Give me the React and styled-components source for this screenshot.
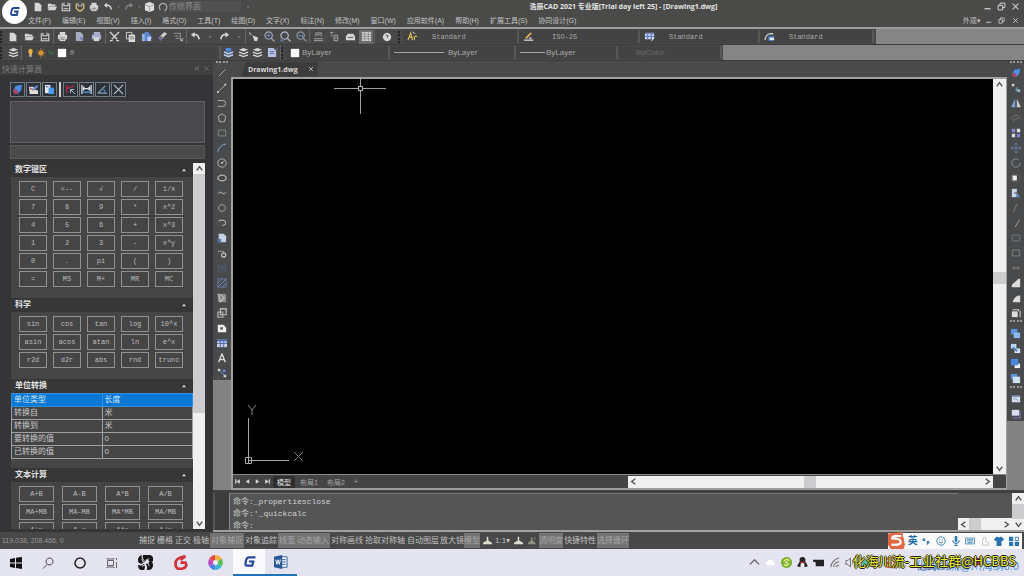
import React from 'react';
import styled, { createGlobalStyle, css } from 'styled-components';

const sans = '"Liberation Sans", "Noto Sans CJK SC", sans-serif';
const mono = '"Liberation Mono", "Noto Sans CJK SC", monospace';

const GlobalStyle = createGlobalStyle`
  *, *::before, *::after { box-sizing: border-box; }
  body { margin: 0; background: #484848; font-family: ${sans}; color: #b4b4b4; }
  button, input, select { font: inherit; color: inherit; margin: 0; padding: 0; border: 0; background: none; border-radius: 0; }
  svg { display: block; }
`;

/* ---------- icon drawings, all on a 12 x 12 grid ---------- */
const W = '#d6d6d6';
const B = '#7f9fd8';
const s = (d, c = W, w = 1) => <path d={d} fill="none" stroke={c} strokeWidth={w} />;
const f = (d, c = W) => <path d={d} fill={c} />;

const drawings = {
  file: f('M2 1h5l3 3v7H2z'),
  open: <>{f('M1 2h4l1 1h4v2H3L1 9z')}{f('M3 5.5h9L10 10H1z')}</>,
  save: <>{s('M1.5 1.5v9h9v-9', W, 1.3)}{s('M3.5 1v3.5h5V1M3 8h6', W, 1.3)}</>,
  saveAs: <>{s('M1.5 1.5v6l3 3h3l3-3v-6', '#d9b76a', 1.6)}{s('M3.5 1v3.5h5V1')}</>,
  print: <>{f('M3 1h6v3H3zM1 4h10v5H1z')}{f('M3 7h6v4H3z', '#eeeeee')}{s('M3 7.5h6M4 9.5h4', '#666')}</>,
  preview: <>{f('M2 1h5l3 3v7H2z', '#a8abc2')}{s('M7 7l3 3', '#6472b5', 1.6)}</>,
  plot: <>{f('M3 1h7v3H3zM1 4h10v5H1z', '#a8aed0')}{f('M3 7h6v4H3z', W)}</>,
  undo: <>{f('M1 4l4-3v6z')}{s('M4 4q5-1 6 5', W, 1.8)}</>,
  redo: <>{f('M11 4L7 1v6z')}{s('M8 4Q3 3 2 9', W, 1.8)}</>,
  redoDim: <>{f('M11 4L7 1v6z', '#858585')}{s('M8 4Q3 3 2 9', '#858585', 1.8)}</>,
  caret: f('M4 5h4l-2 2.5z', '#8a8a8a'),
  db: <>{f('M1 3l5-2 5 2v7l-5 2-5-2z', '#e0e0e0')}{s('M1 4l5 2 5-2M6 6v5', '#999')}</>,
  ring: s('M3 9.5A4.5 4.5 0 1 1 9 9.5l-1 1.5', '#aaa', 1.5),
  cut: s('M1 1l8 8M11 1L3 9M1 10.5h3M8 10.5h3', W, 1.5),
  copy: <>{s('M1.5 1.5h6v7h-6z')}{f('M4 4h7v8H4z', '#dcdcdc')}{s('M5 6.5h5M5 8.5h5', '#777')}</>,
  paste: <>{f('M1 3h6v8H1z', '#98b0dc')}{f('M4 1h4l4 6-2 4H4z', '#5a86cf')}{f('M7 6h4v5H7z', '#b9cdf0')}</>,
  brush: <>{f('M4 5l4-4 3 2-4 4z', '#d0d0d0')}{f('M1 7l3-2 3 2-3 4z', '#70749c')}{s('M4 5l3 3', '#c69c52')}</>,
  block: <>{s('M1 2.5h7M2 5.5h4M8 2v6H3', '#999')}{s('M8 9l3 2M8 11l3-3', W)}</>,
  pan: <>{f('M5 5l6 2-1 4H7z')}{s('M1 2l4 3M2 1v3', '#aaa')}</>,
  zoomIn: <>{s('M5 1a4 4 0 1 0 .1 0M8 8l3.5 3.5', '#9aa5bb', 1.3)}{s('M3 5h4M5 3v4', '#6d91d0')}</>,
  zoom: <>{s('M5 1a4 4 0 1 0 .1 0M8 8l3.5 3.5', '#b5bccb', 1.3)}{s('M1 9v2h3', '#6d91d0')}</>,
  zoomPrev: <>{s('M5 1a4 4 0 1 0 .1 0M8 8l3.5 3.5', '#8f96a5', 1.3)}{s('M3 5h3M7 4v3', '#6d91d0')}</>,
  props: <>{s('M3 6V2h6v4M1 8.5h10M1 10.5h10', '#a6a6a6')}{s('M4 4h4', '#a6a6a6')}</>,
  design: <>{s('M1 1.5h4M3 3v3', '#aaa')}{s('M5.5 4.5h4v6h-4zM7.5 6v3', '#aaa')}</>,
  palette: <>{f('M1 6l2-3h6l2 3v4H1z')}{s('M3 7h6', '#555')}</>,
  calc: <>{f('M1 1h10v10H1z', '#d0d0d0')}{s('M1 3.5h10M1 6h10M1 8.5h10M4 1v10M8 1v10', '#777', .7)}</>,
  help: <>{f('M6 1a5 5 0 1 0 .1 0')}{s('M4.5 4.5q1.5-2 3 0L6 7', '#555', 1.2)}</>,
  textStyle: <>{s('M1 10l3-8 2 8M2 7h4M8 10V6M8 7q1-2 3-1', '#e0c060', 1.2)}{s('M6 1l3 2', '#ddd')}</>,
  dim: <>{s('M1 10h10', W, 1.4)}{s('M3 8l6-6', '#d8b45c', 2)}{f('M7 7h2v2H7z')}</>,
  tableStyle: <>{f('M1 2h10v7H1z', '#c8d2ee')}{s('M1 3h10M1 6h10M4 3v6M8 3v6', '#5570bd')}{s('M8 11l3-4', '#ddd')}</>,
  leader: <>{s('M1 10q1-6 5-7h4', '#ccc', 1.4)}{f('M4 5h7v6H4z', '#3f68a8')}{f('M6 7h5v3H6z', '#dbe6f5')}</>,
  layers: <>{f('M1 3l5-2 5 2-5 2z')}{s('M1 5.5l5 2 5-2M1 8.5l5 2 5-2', W, 1.5)}</>,
  layersBlue: <>{f('M3 1h6v4H3z', '#4f86d8')}{s('M1 5.5l5 2 5-2M1 8.5l5 2 5-2', '#b4c7ee', 1.8)}</>,
  layerFile: <>{f('M1 1h6l3 3v7H1z', '#b9c0e0')}{s('M3 5h5M3 7h5M11 1v3', '#5d6ba6')}</>,
  bulb: <>{f('M6 1a3.5 3.5 0 0 1 2 6v2H4V7a3.5 3.5 0 0 1 2-6z', '#e8b048')}{f('M4.500 9.500h3v2h-3z', '#ddd')}</>,
  sun: <>{f('M6 3a3 3 0 1 0 .1 0', '#eea63a')}{s('M6 0v12M0 6h12M2 2l8 8M10 2l-8 8', '#c88a34', .8)}</>,
  lock: s('M2 6h8M3 6V3M3 8h6', '#3a6b46', 1.6),
  white: f('M1 1h10v10H1z', '#ffffff'),
  min: s('M2 9h8', W, 1.6),
  restore: s('M1.500 4.500h6v6h-6zM4 4V1.500h6.500v6H8', W, 1.3),
  close: s('M2 2l8 8M10 2l-8 8', W, 1.4),
  pin: s('M9 2v8M9 6H5M5 3v6z', '#777'),
  closeDim: s('M2 2l8 8M10 2l-8 8', '#777', 1.3),
  eraser: <>{f('M1 8l3-6 7-1-1 6-4 4z', '#4c8ee6')}{f('M1 8l2-3 4 3-1 3H3z', '#a04863')}</>,
  eraserPen: <>{f('M1 3h5l1 3 4 1v4H2z', '#e5dede')}{f('M5 5l5-4 1 2-4 4z', '#6593d8')}{s('M2 4l4 3', '#b5625d', 1.4)}</>,
  pasteVal: <>{f('M1 1h6v9H1z', '#dce7f2')}{f('M5 4h6v7H5z', '#499bea')}{s('M2 3h3', '#3a5d87')}</>,
  getPoint: <>{s('M2 1v9M2 5l8-3', '#a52e47', 1.8)}{s('M6 6l5 5M6 6v4M6 6h4', '#b7c6de')}</>,
  dist: <>{s('M1 1v10M11 1v10M2 5h8', '#d5e2f0', 1.4)}{s('M1 9h10', '#5593d8', 1.5)}{f('M5 5L2 2v6zM7 5l3-3v6z')}</>,
  angle: <>{s('M1 10L9 2M1 10h10', '#88a5b5', 1.3)}{s('M6 5q3 2 3 5', '#4288cf', 1.3)}</>,
  cross: s('M1 1l10 10M11 1L1 11', '#c0ccd4', 1.1),
  line: s('M2 10l8-8', '#b5b5b5'),
  xline: <>{s('M1 11L11 1', '#b5b5b5')}{f('M0 10h2v2H0zM9 1h2v2H9z')}</>,
  pline: s('M1 3h6a3 3 0 0 1 0 7H1', '#b5b5b5', 1.1),
  polygon: s('M6 1l4.500 3-1.500 6.500H3L1.500 4z', '#b5b5b5', 1.1),
  rect: s('M1.500 2.500h9v7h-9z', '#87918f'),
  rectBlue: s('M1.500 2.500h9v7h-9z', '#76797e'),
  arc: s('M1 11Q2 3 11 1', '#88a5d8', 1.2),
  circle: <>{s('M6 1a5 5 0 1 0 .1 0M6 6l3-3', '#b5b5b5', 1.1)}{f('M5 5h2v2H5z')}</>,
  ellipse: s('M6 2.500a5 3.500 0 1 0 .1 0', '#b5b5b5', 1.4),
  spline: s('M1 7q2-4 5-1t5-1', '#b5b5b5', 1.2),
  cloud: s('M3 3q3-2 6 0 3 3 0 6-3 2-6 0-3-3 0-6z', '#aaa'),
  earc: s('M2 4q4-3 8 0 2 4-4 5', '#aaa', 1.3),
  insert: <>{f('M2 1h6l3 3v7H2z', '#c8d1e8')}{f('M1 7h4v4H1z', '#5578b8')}</>,
  makeBlock: <>{s('M1 4h7v3', '#aaa')}{s('M8 6a2.500 2.500 0 1 0 .1 0', '#ccc', 1.3)}</>,
  points: s('M2 2v3M6 2v3M10 2v3M2 8v3M6 8v3M10 8v3M1 6h10', '#586a96', 1),
  hatch: <>{s('M1 1h10v10H1z', '#697da5')}{s('M1 6l5-5M1 11L11 1M6 11l5-5', '#7396cf')}</>,
  gradient: <>{f('M1 1h10v10H1z', '#8b8b8b')}{s('M3 1l6 5-6 5M1 1l4 10', '#d5d5d5')}</>,
  region: <>{s('M4 1h7v7H4z', '#ccc', 1.3)}{s('M1 5h6v6H1z', '#aaa', 1.5)}</>,
  wipe: <>{f('M1 2h7l3 4v5H1z', '#f0f0f0')}{f('M4 5h3v3H4z', '#555')}</>,
  table: <>{f('M0 2h12v9H0z', '#c6cfe8')}{f('M0 2h12v2H0z', '#4568ba')}{s('M0 6.500h12M4 4v7M8 4v7', '#3f5994')}</>,
  text: s('M2 11L6 1l4 10M3.500 8h5', '#dedede', 1.6),
  nodes: <>{f('M1 1h3v3H1zM8 8h3v3H8z')}{f('M7 2h3v3H7z', '#6391dc')}{s('M3 3l6 6', '#7f9fd8')}</>,
  copyObj: <>{f('M1 1h3v3H1z')}{s('M7 5v6M5 8h6', '#7eb4d8')}{f('M8 8h3v3H8z', '#9bb')}</>,
  mirror: <>{f('M5 1v10H0z', B)}{f('M7 1v10h5z', '#ccc')}</>,
  offset: s('M1 8q1-6 7-5l3 4M3 10q0-4 6-3', '#777', 1.1),
  array: <>{f('M1 1h4v4H1zM7 7h4v4H7z', '#8580d0')}{f('M7 1h4v4H7zM1 7h4v4H1z', '#ddd')}</>,
  move: s('M6 0v12M0 6h12M4 2l2-2 2 2M4 10l2 2 2-2M2 4L0 6l2 2M10 4l2 2-2 2', '#6c84ba', 1),
  rotate: s('M9 2A5 5 0 1 0 11 6', '#8c9295', 1.1),
  scale: <>{f('M1 3h6v6H1z', '#eee')}{s('M1.500 1.500h9v9h-9z', '#5c5c5c')}</>,
  stretch: <>{f('M1 1h6v10H1z', '#c9d4e2')}{f('M7 5l4 6H6z', '#578fc5')}{s('M4 6h4', '#333')}</>,
  trim: s('M3 11L7 1', '#858585', 1),
  extend: s('M5 11l5-9', '#a0a0a0', 1.2),
  join: s('M1 6h10M4 4v4M8 4v4', '#858585'),
  chamfer: f('M1 11h10V1H9L1 8z', '#dcdcdc'),
  fillet: f('M2 11h9V3q-7 0-9 8z', '#dcdcdc'),
  explode: <>{f('M1 4h7v7H1z', '#ddd')}{s('M2 2h7v2M11 3v8', '#ccc', 1.3)}</>,
  order1: <>{f('M1 1h7v6H1z', '#5b93e0')}{f('M4 5h7v6H4z', '#8db9ee')}</>,
  order2: <>{f('M1 1h6v5H1z', '#bed5f1')}{f('M5 6h6v5H5z', '#dce8f6')}{s('M3 5l5 4', '#4c82cd', 2)}</>,
  order3: <>{f('M5 6h6v5H5z', '#eee')}{f('M1 1h8v7H1z', '#4d88dc')}</>,
  order4: <>{f('M1 1h7v6H1z', '#5b93e0')}{f('M3 4h8v7H3z', '#cde2f4')}</>,
  order5: <>{f('M1 2h10v8H1z', '#d6dcea')}{s('M1 3h10M3 7l2-2 3 3', '#6885bd')}</>,
  order6: <>{f('M1 1h9v7H1z', '#dcdcf0')}{s('M2 10.500h9V3', '#7569b5', 1.5)}</>,
  up: s('M3 8l3-4 3 4', '#555', 1.6),
  down: s('M3 4l3 4 3-4', '#555', 1.6),
  left: s('M8 3L4 6l4 3', '#555', 1.6),
  right: s('M4 3l4 3-4 3', '#555', 1.6),
  triUp: f('M3 8h6L6 4z', '#d8d8d8'),
  first: f('M2 2h2v8H2zM10 2v8L4 6z'),
  prev: f('M9 2v8L3 6z'),
  next: f('M3 2v8l6-4z'),
  last: f('M2 2v8l6-4zM8 2h2v8H8z'),
  person: f('M5 1h2v5l5 3v2H0V9l5-3z', '#dcdccc'),
  personDim: <>{f('M4 2h2v4l4 3v2H0V9l4-3z', '#909080')}{s('M9 1v4', '#909080')}</>,
  windows: f('M0 2l5-1v4.500H0zM6 .8L12 0v5.500H6zM0 6.500h5V11l-5-1zM6 6.500h6V12l-6-1z', '#111'),
  search: s('M7.500 1a3.500 3.500 0 1 0 .1 0M5 7.500L1 11.500', '#444', 1),
  cortana: s('M6 1a5 5 0 1 0 .1 0', '#222', 1.5),
  taskView: s('M1.500 3.500h6v5h-6zM1 1v1h7V1M1 11v-1h7v1M10.500 1v2M10.500 5v6', '#555', .9),
  shutter: <>
    {f('M4 0h5q3 0 3 3v2q-2 1-4-1-1-1-2 1-3-2-2-5zM0 4q0-3 3-4-1 4 3 5-2 1-3 2-3 0-3-3zM12 8q0 4-4 4H7q1-3-1-5 3 0 3-2 3 0 3 3zM0 8q3 1 5-1 1 2 0 5H3q-3 0-3-4z', '#161616')}
    {s('M3 3q0 3 3 3M9 3q-3 0-3 3M9 9q0-3-3-3M3 9q3 0 3-3', '#e4e4f0', .7)}
  </>,
  redG: s('M10 1Q2 2 2 7t5 4 3-5H6M10 1L6 4', '#cf343b', 2.2),
  fan: <>
    {f('M6 6L6 0A6 6 0 0 0 1 3z', '#e54c48')}{f('M6 6L1 3a6 6 0 0 0 0 6z', '#c34bbd')}
    {f('M6 6L1 9a6 6 0 0 0 5 3z', '#4d80e4')}{f('M6 6v6a6 6 0 0 0 5-3z', '#36b9d5')}
    {f('M6 6l5 3a6 6 0 0 0 0-6z', '#58bf53')}{f('M6 6l5-3a6 6 0 0 0-5-3z', '#f0b33d')}
    <circle cx="6" cy="6" r="2" fill="#f4f0f6" />
  </>,
  gLogo: s('M11.500 2.200H5.500Q3.500 2.200 2.800 5L2.200 8Q2 9.800 4 9.800H8.500L9.500 6H5.500', '#23479b', 2),
  word: <>
    {f('M6 1h5.500v10H6z', '#f5f8ff')}{s('M6 1.500h5.200v9H6M7 4h3M7 6h3M7 8h3', '#285796', .8)}
    {f('M0 1.500L7 0v12L0 10.500z', '#285796')}{s('M1.500 4l1 4 1-4 1 4 1-4', '#fff', .8)}
  </>,
  caretUp: s('M1 8l5-5 5 5', '#555', 1.2),
  weather: f('M2 9q-2-3 1-4 2-4 5-1 4 1 2 5z', '#ffffff'),
  green: <>{f('M6 0a6 6 0 1 0 .1 0', '#79ae32')}{s('M3 5q3-4 6-1M9 7q-3 4-6 1', '#e9f07a', 1.5)}{f('M5 5h2v2H5z', '#fff')}</>,
  teal: f('M1 3h10v7H1z', '#5cc4b4'),
  badge: <>{f('M1 1h10v8H8l-2 3-2-3H1z', '#a8283a')}</>,
  penguin: <>{f('M6 0q4 0 3 5l3 5-3 1H3L0 10l3-5Q2 0 6 0z', '#272224')}{f('M6 6q3 1 2 5H4q-1-4 2-5z', '#eee')}{s('M3 5.500q3 1 6 0', '#c1313b', 1.3)}</>,
  battery: f('M2 3h10v7H3V6L0 5V3z', '#222'),
  wifi: s('M2 11Q3 3 11 1M5 11q0-4 6-6M8 11q0-2 3-2', '#777', 1.2),
  speaker: <>{s('M1 4h2l3-3v10L3 8H1z', '#666')}{s('M8 4q1.500 2 0 4M10 2q3 4 0 8', '#777')}</>,
  smile: <>{s('M6 1a5 5 0 1 0 .1 0M3.500 7q2.500 3 5 0', '#3179ae', 1.1)}{f('M4 4h1v1H4zM7 4h1v1H7z', '#3179ae')}</>,
  mic: <>{f('M4.500 0h3v7h-3z', '#2a73ac')}{s('M2 5q0 4 4 4t4-4M6 9v3M4 11.500h4', '#2a73ac', 1.2)}</>,
  keyboard: s('M.5 2.500h11v7H.5zM2 4.500h8M2 6h8M3 8h6', '#3b82b5', 1),
  hand: s('M3 11V6L5 1l2 1v5l3 1v3z', '#c3c3c3', 1.1),
  shirt: f('M3 1h1.500q1.500 1.500 3 0H9l3 2.500L10.500 6H9v6H3V6H1.500L0 3.500z', '#2a73ac'),
  grid: <>{f('M0 1h5v5H0zM7 7h5v5H7zM0 7h5v5H0z', '#2a73ac')}{s('M7.500 1.500h4v4h-4z', '#2a73ac')}</>,
  dots: f('M2 3h3v3H2zM7 6h3v2L7 11z', '#3179ae'),
  sogou: <>{f('M0 1l10-1 2 9-1 3-9 0-2-3z', '#e26745')}{s('M9.500 3Q3 2 3 4.500q6 0 6 2.500T2.500 9', '#fff', 1.6)}</>,
};

const Icon = ({ name, size = 11 }) => (
  <svg width={size} height={size} viewBox="0 0 12 12" aria-hidden="true">{drawings[name]}</svg>
);

/* ---------- frame ---------- */
const App = styled.div`
  position: relative;
  display: flex;
  flex-direction: column;
  height: 100vh;
  overflow: hidden;
  background: #454545;
`;
const IconButton = styled.button`
  display: flex;
  align-items: center;
  justify-content: center;
  width: ${(p) => p.$w || 14}px;
  height: ${(p) => p.$h || 14}px;
  flex: none;
  background: ${(p) => (p.$active ? '#6c6c6c' : 'transparent')};
`;
const Tool = ({ name, size, ...rest }) => (
  <IconButton type="button" aria-label={name} {...rest}><Icon name={name} size={size} /></IconButton>
);
const Spacer = styled.div`flex: 1;`;

const Logo = styled.button`
  && { position: absolute; left: 2px; top: -1px; width: 25px; height: 25px; border-radius: 50%; background: #fff; }
  display: flex;
  align-items: center;
  justify-content: center;
  z-index: 2;
`;
const TitleBar = styled.header`
  display: flex;
  align-items: center;
  flex: none;
  height: 13px;
  padding: 0 2px 0 31px;
  background: #4a4b49;
  font-size: 8px;
`;
const Workspace = styled.select`
  && { width: 72px; height: 11px; appearance: none; background: #505150; color: #8c8c8c; }
`;
const Title = styled.h1`
  flex: 1;
  margin: 0;
  padding-left: 12px;
  text-align: center;
  font: bold 7px/12px "Open Sans", "Noto Sans CJK SC", sans-serif;
  color: #e4e4e4;
`;
const MenuBar = styled.nav`
  display: flex;
  align-items: center;
  flex: none;
  height: 16px;
  gap: 11px;
  padding: 0 2px 0 28px;
  background: #4a4b49;
  border-bottom: 2px solid #9c9c9c;
  font-size: 7px;
  color: #c2c2c2;
  white-space: nowrap;
`;
const MenuButton = styled.button`height: 14px; flex: none;`;
const Strip = styled.div`
  display: flex;
  flex: none;
  height: 16px;
  background: #858585;
  border-bottom: 1px solid #3c3c3c;
`;
const StripTools = styled.div`
  display: flex;
  align-items: center;
  width: ${(p) => p.$w}px;
  background: #484848;
`;
const Group = styled.div`
  display: flex;
  align-items: center;
  justify-content: space-around;
  width: ${(p) => p.$w}px;
  height: ${(p) => p.$h || 15}px;
  flex: none;
  border-right: ${(p) => (p.$plain ? 0 : 1)}px solid #636363;
`;
const Grip = styled.div`
  width: 5px;
  height: 12px;
  flex: none;
  border-left: 2px dotted #222;
`;
const StyleSelect = styled.select`
  && {
    appearance: none;
    flex: 1;
    min-width: 0;
    height: 13px;
    padding-left: ${(p) => p.$pad || 0}px;
    background: #434343;
    color: ${(p) => (p.$dim ? '#686868' : '#a8a8a8')};
    font: ${(p) => (p.$sans ? `8px ${sans}` : `7px ${mono}`)};
  }
`;
const Field = styled.label`
  display: flex;
  align-items: center;
  gap: ${(p) => p.$gap || 2}px;
  width: ${(p) => p.$w}px;
  height: 13px;
  flex: none;
  padding: 0 4px;
  background: #434343;
  border-right: 2px solid #585858;
`;
const Rule = styled.span`
  width: ${(p) => p.$w}px;
  height: 1px;
  background: #a5a5a5;
`;

/* ---------- calculator ---------- */
const Body = styled.div`
  display: flex;
  flex: 1;
  min-height: 0;
`;
const Calc = styled.aside`
  display: flex;
  flex-direction: column;
  width: 213px;
  flex: none;
  background: #353537;
  padding-bottom: 3px;
`;
const CalcTitle = styled.div`
  display: flex;
  align-items: center;
  flex: none;
  height: 14px;
  padding: 0 2px;
  background: #404040;
  color: #7c7c7c;
  font-size: 8px;
`;
const CalcTools = styled.div`
  display: flex;
  gap: 1px;
  flex: none;
  margin: 7px 0 4px 10px;
`;
const CalcTool = styled.button`
  && { width: 15px; height: 15px; border: 1px solid #707c84; background: #2d3238; }
  display: flex;
  align-items: center;
  justify-content: center;
`;
const Divider = styled.span`width: 2px; margin: 0 1px; background: #d0d0d0;`;
const Display = styled.output`
  height: 42px;
  flex: none;
  margin: 0 8px 2px 10px;
  background: #4a4a4c;
  border: 1px solid #606062;
`;
const CalcInput = styled.input`
  && { height: 14px; flex: none; margin: 0 8px 4px 10px; background: #4a4a4c; border: 1px solid #585858; }
`;
const ScrollArea = styled.div`
  display: flex;
  flex: 1;
  min-height: 0;
  margin: 0 8px 0 11px;
`;
const Sections = styled.div`
  flex: 1;
  min-height: 0;
  overflow: hidden;
  background: #454546;
`;
const SectionHead = styled.button`
  && { width: 100%; height: 14px; padding: 0 5px 0 4px; background: #363636; }
  display: flex;
  align-items: center;
  justify-content: space-between;
  color: #e2e2e2;
  font: bold 8px/14px ${sans};
`;
const Keys = styled.div`
  display: grid;
  grid-template-columns: repeat(${(p) => p.$cols}, 1fr);
  gap: 2px ${(p) => (p.$cols === 5 ? 6 : 8)}px;
  padding: 4px 10px 11px 8px;
`;
const Key = styled.button`
  && { height: 16px; border: 1px solid #909090; color: #bcbcbc; font: 7px/14px ${mono}; }
`;
const Units = styled.table`
  width: 100%;
  border-collapse: collapse;
  table-layout: fixed;
  margin-bottom: 9px;
  font: 8px/12px ${sans};
  color: #c8c8c8;
`;
const UnitCell = styled.td`
  height: 13px;
  padding: 0 2px;
  border: 1px solid #a0a0a0;
  border-color: ${(p) => (p.$on ? '#2f8fe0' : '#a0a0a0')};
  background: ${(p) => (p.$on ? '#0a78d2' : 'transparent')};
  color: ${(p) => (p.$on ? '#cfe6fa' : 'inherit')};
`;

/* ---------- scroll bars ---------- */
const Bar = styled.div`
  display: flex;
  flex-direction: ${(p) => (p.$h ? 'row' : 'column')};
  align-items: center;
  flex: ${(p) => (p.$size ? 'none' : 1)};
  ${(p) => (p.$h
    ? css`height: 12px; width: ${p.$size ? `${p.$size}px` : 'auto'};`
    : css`width: ${p.$thick || 12}px; flex: none;`)}
  background: #f0f0f0;
`;
const Track = styled.div`flex: ${(p) => p.$f};`;
const Thumb = styled.div`
  flex: ${(p) => (p.$f ? p.$f : 'none')};
  width: ${(p) => (p.$h ? '12px' : '100%')};
  height: ${(p) => (p.$h ? '100%' : p.$f ? 'auto' : '12px')};
  background: #cdcdcf;
`;

/* ---------- drawing area ---------- */
const ToolColumn = styled.div`
  width: ${(p) => p.$w}px;
  flex: none;
  background: #828282;
`;
const ToolStack = styled.div`
  display: flex;
  flex-direction: column;
  align-items: center;
  background: #484a4c;
`;
const TopGrip = styled.div`
  width: 12px;
  height: ${(p) => p.$h || 4}px;
  border-top: 2px dotted #999;
`;
const Center = styled.div`
  display: flex;
  flex-direction: column;
  flex: 1;
  min-width: 0;
`;
const Upper = styled.div`display: flex; flex: 1; min-height: 0;`;
const DrawingPane = styled.main`
  display: flex;
  flex-direction: column;
  flex: 1;
  min-width: 0;
  background: #4a4a4a;
`;
const DocTabs = styled.div`
  display: flex;
  align-items: center;
  height: 16px;
  flex: none;
  padding-left: 10px;
`;
const DocTab = styled.button`
  && { height: 15px; padding: 0 4px 0 7px; background: #3c3c3c; color: #d8d8d8; font: bold 7px/15px "Open Sans", sans-serif; }
  display: flex;
  align-items: center;
  gap: 10px;
  clip-path: polygon(5px 0, 100% 0, 100% 100%, 0 100%);
`;
const Frame = styled.div`
  display: flex;
  flex-direction: column;
  flex: 1;
  min-height: 0;
  border: 2px solid #a0a0a0;
  border-width: 2px 1px 2px 2px;
`;
const CanvasRow = styled.div`display: flex; flex: 1; min-height: 0;`;
const Canvas = styled.div`
  position: relative;
  flex: 1;
  background: #000;
`;
const Crosshair = styled.svg`position: absolute; left: 100px; top: -1px;`;
const Ucs = styled.svg`position: absolute; left: 8px; bottom: 4px;`;
const Layouts = styled.div`
  display: flex;
  align-items: center;
  height: 14px;
  flex: none;
  background: #444;
  border-top: 1px solid #888;
  color: #a8a8a8;
  font-size: 7px;
`;
const LayoutTab = styled.button`
  && { height: 12px; padding: 0 4px; background: ${(p) => (p.$on ? '#303030' : 'transparent')}; color: ${(p) => (p.$on ? '#e2e2e2' : 'inherit')}; }
`;
const LayoutList = styled.div`
  display: flex;
  align-items: center;
  gap: 1px;
  width: 395px;
  flex: none;
`;
const Command = styled.section`
  display: flex;
  flex: none;
  height: 42px;
  border-top: 3px solid #404040;
  border-bottom: 2px solid #a0a0a0;
  background: #555;
`;
const CommandSide = styled.div`
  width: 14px;
  flex: none;
  margin-left: 2px;
  background: #3d3d3d;
`;
const CommandText = styled.div`
  display: flex;
  flex-direction: column;
  flex: 1;
  padding: 2px 0 0 3px;
  border-left: 1px solid #888;
  border-top: 1px solid #777;
  font: 8px/12px ${mono};
  color: #d0d0d0;
`;
const Prompt = styled.label`display: flex; height: 10px;`;
const PromptInput = styled.input`&& { flex: 1; height: 10px; }`;
const CommandScroll = styled.div`align-self: flex-end;`;

/* ---------- status bar ---------- */
const StatusRow = styled.footer`
  display: flex;
  align-items: center;
  height: 17px;
  flex: none;
  background: #484848;
  color: #b2b2b2;
  font-size: 8px;
  white-space: nowrap;
`;
const Coords = styled.div`width: 138px; padding-left: 2px; color: #989898; font-size: 7px;`;
const Toggle = styled.button`
  && {
    height: 15px;
    padding: 0 ${(p) => (p.$tight ? 0 : 1)}px;
    background: ${(p) => (p.$on ? '#737373' : 'transparent')};
    color: ${(p) => (p.$on ? '#a6a6a6' : '#c0c0c0')};
    font: 8px/15px ${sans};
  }
`;
const Ime = styled.div`
  display: flex;
  align-items: center;
  justify-content: space-between;
  width: 134px;
  height: 16px;
  margin-right: 2px;
  padding-right: 2px;
  background: #fbfbfb;
`;
const ImeMode = styled.button`&& { color: #1e6aa8; font: bold 10px/16px ${sans}; }`;

/* ---------- task bar ---------- */
const TaskBar = styled.nav`
  position: relative;
  display: flex;
  align-items: center;
  height: 27px;
  flex: none;
  background: #e4e4f0;
`;
const Task = styled.button`
  && {
    width: ${(p) => p.$w || 32}px;
    height: 27px;
    background: ${(p) => (p.$on ? '#fafafe' : 'transparent')};
    border-bottom: ${(p) => (p.$run ? 2 : 0)}px solid #1f73b8;
  }
  display: flex;
  align-items: center;
  justify-content: center;
`;
const Tray = styled.div`
  display: flex;
  align-items: center;
  gap: 2px;
  width: 277px;
`;
const Clock = styled.time`
  margin: 0 16px 0 12px;
  font: 8px/9px ${sans};
  text-align: center;
  color: #444;
`;
const Version = styled.span`
  position: absolute;
  right: 5px;
  bottom: 3px;
  font: 11px/14px ${sans};
  color: #4a90dc;
`;
const Watermark = styled.span`
  position: absolute;
  right: 8px;
  top: 4px;
  font: 13px/16px "Noto Sans CJK SC", sans-serif;
  color: #eaf02a;
  text-shadow: 1px 0 #222, -1px 0 #222, 0 1px #222, 0 -1px #222;
`;

const menus = ['文件(F)', '编辑(E)', '视图(V)', '插入(I)', '格式(O)', '工具(T)', '绘图(D)', '文字(X)', '标注(N)', '修改(M)', '窗口(W)', '应用软件(A)', '帮助(H)', '扩展工具(S)', '协同设计(G)'];
const numberKeys = ['C', '<--', '√', '/', '1/x', '7', '8', '9', '*', 'x^2', '4', '5', '6', '+', 'x^3', '1', '2', '3', '-', 'x^y', '0', '.', 'pi', '(', ')', '=', 'MS', 'M+', 'MR', 'MC'];
const scienceKeys = ['sin', 'cos', 'tan', 'log', '10^x', 'asin', 'acos', 'atan', 'ln', 'e^x', 'r2d', 'd2r', 'abs', 'rnd', 'trunc'];
const textKeys = ['A+B', 'A-B', 'A*B', 'A/B', 'MA+MB', 'MA-MB', 'MA*MB', 'MA/MB', 'A+x', 'A-x', 'A*x', 'A/x'];
const units = [['单位类型', '长度'], ['转换自', '米'], ['转换到', '米'], ['要转换的值', '0'], ['已转换的值', '0']];
const drawTools = ['line', 'xline', 'pline', 'polygon', 'rect', 'arc', 'circle', 'ellipse', 'spline', 'cloud', 'earc', 'insert', 'makeBlock', 'points', 'hatch', 'gradient', 'region', 'wipe', 'table', 'text', 'nodes'];
const editTools = ['eraser', 'copyObj', 'mirror', 'offset', 'array', 'move', 'rotate', 'scale', 'stretch', 'trim', 'extend', 'rectBlue', 'rect', 'join', 'chamfer', 'fillet', 'explode'];
const togglesLeft = [['捕捉'], ['栅格'], ['正交'], ['极轴'], ['对象捕捉', 1], ['对象追踪'], ['线宽', 1], ['动态输入', 1], ['对称画线'], ['拾取对称轴'], ['自动图层'], ['放大镜'], ['模型', 1]];
const togglesRight = [['透明度', 1], ['快捷特性'], ['选择循环', 1]];

const Section = ({ title, children }) => (
  <section>
    <SectionHead type="button">{title}<Icon name="triUp" size={8} /></SectionHead>
    {children}
  </section>
);
const KeyPad = ({ cols, keys }) => (
  <Keys $cols={cols}>{keys.map((k) => <Key type="button" key={k}>{k}</Key>)}</Keys>
);
const StylePicker = ({ icon, value, w, pad }) => (
  <Field $w={w}>
    <Icon name={icon} />
    <StyleSelect $pad={pad} aria-label={icon}><option>{value}</option></StyleSelect>
  </Field>
);

export default function CadWindow() {
  return (
    <App>
      <GlobalStyle />
      <Logo type="button" aria-label="G"><Icon name="gLogo" size={11} /></Logo>
      <TitleBar>
        {['file', 'open', 'save', 'saveAs', 'print', 'undo'].map((n) => <Tool key={n} name={n} size={10} />)}
        <Tool name="caret" $w={7} size={8} />
        <Tool name="redoDim" size={10} />
        <Tool name="caret" $w={7} size={8} />
        <Tool name="db" $w={13} size={11} />
        <Tool name="ring" $w={13} size={10} />
        <Workspace aria-label="workspace"><option>传统界面</option></Workspace>
        <Tool name="caret" size={8} />
        <Title>浩辰CAD 2021 专业版[Trial day left 25] - [Drawing1.dwg]</Title>
        <Tool name="min" size={9} />
        <Tool name="restore" size={9} />
        <Tool name="close" size={9} />
      </TitleBar>
      <MenuBar>
        {menus.map((m) => <MenuButton type="button" key={m}>{m}</MenuButton>)}
        <Spacer />
        <Group $w={60} $h={14} $plain>
          <MenuButton type="button">外观▾</MenuButton>
          <Tool name="min" $w={12} size={7} />
          <Tool name="restore" $w={12} size={7} />
          <Tool name="close" $w={12} size={7} />
        </Group>
      </MenuBar>
      <Strip>
        <StripTools $w={876}>
          <Grip />
          <Group $w={49}>{['file', 'open', 'save'].map((n) => <Tool key={n} name={n} size={10} />)}</Group>
          <Group $w={52}>{['print', 'preview', 'plot'].map((n) => <Tool key={n} name={n} />)}</Group>
          <Group $w={81}>{['cut', 'copy', 'paste', 'brush', 'block'].map((n) => <Tool key={n} name={n} />)}</Group>
          <Group $w={59}>
            <Tool name="undo" /><Tool name="caret" $w={10} size={8} /><Tool name="redo" /><Tool name="caret" $w={10} size={8} />
          </Group>
          <Group $w={64}>{['pan', 'zoomIn', 'zoom', 'zoomPrev'].map((n) => <Tool key={n} name={n} />)}</Group>
          <Group $w={65}>
            <Tool name="props" /><Tool name="design" /><Tool name="palette" /><Tool name="calc" $active />
          </Group>
          <Group $w={23} $plain><Tool name="help" size={10} /></Group>
          <Grip />
          <StylePicker icon="textStyle" value="Standard" w={116} pad={12} />
          <StylePicker icon="dim" value="ISO-25" w={121} pad={16} />
          <StylePicker icon="tableStyle" value="Standard" w={120} pad={12} />
          <StylePicker icon="leader" value="Standard" w={114} pad={12} />
        </StripTools>
      </Strip>
      <Strip>
        <StripTools $w={723}>
          <Grip />
          <Group $w={17}><Tool name="layers" /></Group>
          <Field $w={199} $gap={1}>
            <Icon name="bulb" size={9} /><Icon name="sun" size={10} /><Icon name="lock" size={9} /><Icon name="white" size={10} />
            <StyleSelect $pad={2} aria-label="layer"><option>0</option></StyleSelect>
          </Field>
          <Group $w={60}>{['layersBlue', 'layers', 'layers', 'layerFile'].map((n, i) => <Tool key={i} name={n} />)}</Group>
          <Grip />
          <Field $w={104}><Icon name="white" size={10} /><StyleSelect $sans aria-label="color"><option>ByLayer</option></StyleSelect></Field>
          <Field $w={126} $gap={4}><Rule $w={50} /><StyleSelect $sans aria-label="linetype"><option>ByLayer</option></StyleSelect></Field>
          <Field $w={102} $gap={1}><Rule $w={25} /><StyleSelect $sans aria-label="lineweight"><option>ByLayer</option></StyleSelect></Field>
          <Field $w={104}><StyleSelect $sans $dim $pad={14} aria-label="plot style"><option>ByColor</option></StyleSelect></Field>
        </StripTools>
      </Strip>
      <Body>
        <Calc>
          <CalcTitle>
            快速计算器<Spacer />
            <Tool name="pin" size={7} $w={10} /><Tool name="closeDim" size={7} $w={10} />
          </CalcTitle>
          <CalcTools>
            {['eraser', 'eraserPen', 'pasteVal'].map((n) => <CalcTool type="button" key={n} aria-label={n}><Icon name={n} /></CalcTool>)}
            <Divider />
            {['getPoint', 'dist', 'angle', 'cross'].map((n) => <CalcTool type="button" key={n} aria-label={n}><Icon name={n} /></CalcTool>)}
          </CalcTools>
          <Display />
          <CalcInput aria-label="expression" />
          <ScrollArea>
            <Sections>
              <Section title="数字键区"><KeyPad cols={5} keys={numberKeys} /></Section>
              <Section title="科学"><KeyPad cols={5} keys={scienceKeys} /></Section>
              <Section title="单位转换">
                <Units>
                  <tbody>
                    {units.map(([k, v], i) => (
                      <tr key={k}><UnitCell $on={i === 0}>{k}</UnitCell><UnitCell $on={i === 0}>{v}</UnitCell></tr>
                    ))}
                  </tbody>
                </Units>
              </Section>
              <Section title="文本计算"><KeyPad cols={4} keys={textKeys} /></Section>
            </Sections>
            <Bar>
              <Icon name="up" /><Thumb $f={236} /><Track $f={104} /><Icon name="down" />
            </Bar>
          </ScrollArea>
        </Calc>
        <Center>
          <Upper>
            <ToolColumn $w={18}>
              <ToolStack>
                <TopGrip />
                {drawTools.map((n) => <Tool key={n} name={n} $h={15} size={10} />)}
              </ToolStack>
            </ToolColumn>
            <DrawingPane>
              <DocTabs><DocTab type="button">Drawing1.dwg<Icon name="close" size={6} /></DocTab></DocTabs>
              <Frame>
                <CanvasRow>
                  <Canvas>
                    <Crosshair width="54" height="38" viewBox="0 0 54 38">
                      <path d="M1 10.500H53M27.500 0V36" stroke="#a0a0a0" fill="none" />
                      <path d="M25.500 8.500h4v4h-4z" stroke="#c0c0c0" fill="#000" />
                    </Crosshair>
                    <Ucs width="64" height="68" viewBox="0 0 64 68">
                      <path d="M7.500 16v46M7 58.500h41M4.500 55.500h6v6h-6z" stroke="#a8a8a8" fill="none" />
                      <path d="M7 3l4 5 4-5M11 8v5M53 50l9 9M62 50l-9 9" stroke="#858585" fill="none" />
                    </Ucs>
                  </Canvas>
                  <Bar $thick={13}>
                    <Icon name="up" /><Track $f={182} /><Thumb /><Track $f={180} /><Icon name="down" />
                  </Bar>
                </CanvasRow>
                <Layouts>
                  <LayoutList>
                    {['first', 'prev', 'next', 'last'].map((n) => <Tool key={n} name={n} $w={9} size={7} />)}
                    <LayoutTab type="button" $on>模型</LayoutTab>
                    <LayoutTab type="button">布局1</LayoutTab>
                    <LayoutTab type="button">布局2</LayoutTab>
                    <LayoutTab type="button">+</LayoutTab>
                  </LayoutList>
                  <Bar $h>
                    <Icon name="left" /><Track $f={165} /><Thumb $h /><Track $f={166} /><Icon name="right" />
                  </Bar>
                  <Group $w={13} $h={12} $plain />
                </Layouts>
              </Frame>
            </DrawingPane>
            <ToolColumn $w={17}>
              <ToolStack>
                <TopGrip />
                {editTools.map((n, i) => <Tool key={i} name={n} $h={15} size={10} />)}
                <TopGrip $h={6} />
                {['order1', 'order2', 'order3', 'order4'].map((n) => <Tool key={n} name={n} $h={15} />)}
                <TopGrip $h={5} />
                {['order5', 'order6'].map((n) => <Tool key={n} name={n} $h={15} size={10} />)}
              </ToolStack>
            </ToolColumn>
          </Upper>
          <Command>
            <CommandSide />
            <CommandText>
              <div>命令:_propertiesclose</div>
              <div>命令:'_quickcalc</div>
              <Prompt>命令:<PromptInput aria-label="命令" /></Prompt>
            </CommandText>
            <CommandScroll>
              <Bar $h $size={54}><Icon name="left" /><Thumb $h /><Track $f={1} /><Icon name="right" /></Bar>
            </CommandScroll>
            <Bar><Icon name="up" /><Thumb $f={1} /><Icon name="down" /></Bar>
          </Command>
        </Center>
      </Body>
      <StatusRow>
        <Coords>119.038, 208.466, 0</Coords>
        {togglesLeft.map(([t, on], i) => <Toggle type="button" key={t} $on={on} $tight={i > 10}>{t}</Toggle>)}
        <Tool name="person" size={9} />
        <Toggle type="button">1:1▾</Toggle>
        <Tool name="person" size={9} /><Tool name="personDim" size={9} />
        {togglesRight.map(([t, on]) => <Toggle type="button" key={t} $on={on} $tight={on}>{t}</Toggle>)}
        <Spacer />
        <Ime>
          <Tool name="sogou" size={17} $w={17} $h={16} />
          <ImeMode type="button">英</ImeMode>
          {['dots', 'smile', 'mic', 'keyboard', 'hand', 'shirt', 'grid'].map((n) => <Tool key={n} name={n} $w={12} size={10} />)}
        </Ime>
      </StatusRow>
      <TaskBar>
        {['windows', 'search', 'cortana', 'taskView'].map((n) => <Task type="button" key={n} aria-label={n}><Icon name={n} size={12} /></Task>)}
        {['shutter', 'redG', 'fan'].map((n) => <Task type="button" key={n} aria-label={n} $w={35}><Icon name={n} size={15} /></Task>)}
        <Task type="button" aria-label="CAD" $on $run><Icon name="gLogo" size={13} /></Task>
        <Task type="button" aria-label="Word" $run><Icon name="word" size={14} /></Task>
        <Spacer />
        <Tray>
          {['caretUp', 'weather', 'green', 'penguin', 'battery', 'wifi', 'speaker', 'teal'].map((n) => <Tool key={n} name={n} />)}
          <Tool name="sogou" $w={30} />
          <Clock>15:34<br />2020/9/9</Clock>
          <Tool name="badge" />
        </Tray>
        <Version>化海川流@川海纲8.0</Version>
        <Watermark>化海川流-工业社群@HCBBS</Watermark>
      </TaskBar>
    </App>
  );
}
